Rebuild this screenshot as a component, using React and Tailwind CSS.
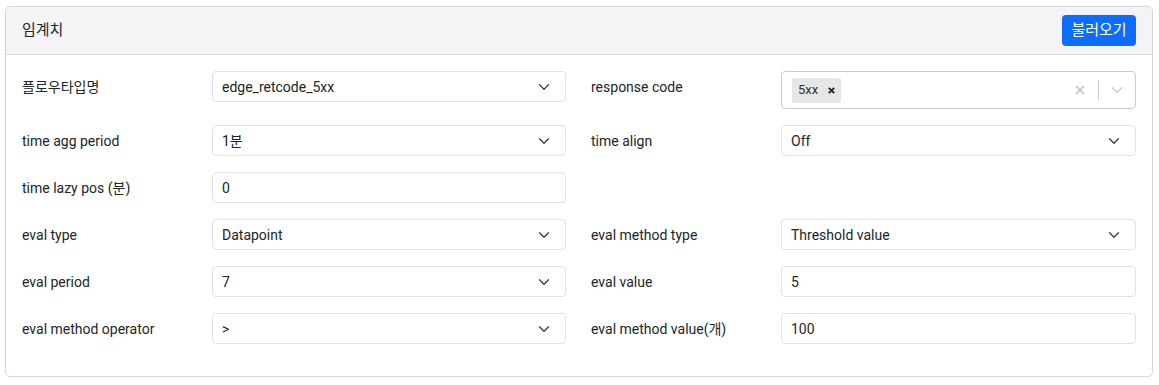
const font = { fontFamily: 'Roboto, "Noto Sans CJK KR", sans-serif' };

function Chevron({ className = 'text-[#343a40]' }) {
  return (
    <svg width="12" height="12" viewBox="0 0 16 16" className={className} fill="none">
      <path d="M2 5l6 6 6-6" stroke="currentColor" strokeWidth="1.6" strokeLinecap="round" strokeLinejoin="round" />
    </svg>
  );
}

function Select({ value }) {
  return (
    <div className="h-[31px] flex items-center justify-between pl-[9px] pr-[15px] border border-[#dee2e6] rounded-[4px] bg-white text-sm text-[#212529]">
      <span>{value}</span>
      <Chevron />
    </div>
  );
}

function Input({ value }) {
  return (
    <div className="h-[31px] flex items-center pl-[9px] border border-[#dee2e6] rounded-[4px] bg-white text-sm text-[#212529]">
      {value}
    </div>
  );
}

function MultiSelect() {
  return (
    <div className="h-[38px] flex items-center border border-[#cccccc] rounded-[4px] bg-white">
      <div className="flex-1 pl-[10px]">
        <span className="inline-flex items-center h-[25px] bg-[#e6e6e6] rounded-[2px] text-[13px] text-[#333]">
          <span className="pl-[6px] pr-[4px]">5xx</span>
          <span className="px-[5px] text-[#222]">
            <svg width="9" height="9" viewBox="0 0 10 10">
              <path d="M2 2l6 6M8 2l-6 6" stroke="currentColor" strokeWidth="2" />
            </svg>
          </span>
        </span>
      </div>
      <div className="flex items-center h-full">
        <span className="p-[8px] w-[36px] flex justify-center text-[#cccccc]">
          <svg width="12" height="12" viewBox="0 0 12 12">
            <path d="M2 2l8 8M10 2l-8 8" stroke="currentColor" strokeWidth="2" />
          </svg>
        </span>
        <span className="w-px h-[20px] bg-[#cccccc]" />
        <span className="p-[8px] w-[36px] flex justify-center">
          <Chevron className="text-[#cccccc]" />
        </span>
      </div>
    </div>
  );
}

function Field({ label, children }) {
  return (
    <div className="grid grid-cols-[190px_1fr] items-start">
      <label className="h-[31px] flex items-center text-sm text-[#212529]">{label}</label>
      <div>{children}</div>
    </div>
  );
}

export default function App() {
  return (
    <div className="bg-white w-[1159px] h-[385px] pt-[6px] pl-[5px] pr-[6px]" style={font}>
      <div className="border border-[#d6d6d9] rounded-[5px] overflow-hidden">
        <div className="h-[48px] flex items-center justify-between pl-[16px] pr-[16px] bg-[#f4f4f6] border-b border-[#d6d6d9]">
          <span className="text-[15px] text-[#212529]">임계치</span>
          <button className="h-[31px] w-[74px] rounded-[4px] bg-[#0d6efd] text-white text-[15px]">불러오기</button>
        </div>
        <div className="px-[16px] pt-[16px] pb-[32px] grid grid-cols-[544px_1fr] gap-x-[25px] gap-y-[16px]">
          <Field label="플로우타입명"><Select value="edge_retcode_5xx" /></Field>
          <Field label="response code"><MultiSelect /></Field>

          <Field label="time agg period"><Select value="1분" /></Field>
          <Field label="time align"><Select value="Off" /></Field>

          <Field label="time lazy pos (분)"><Input value="0" /></Field>
          <div />

          <Field label="eval type"><Select value="Datapoint" /></Field>
          <Field label="eval method type"><Select value="Threshold value" /></Field>

          <Field label="eval period"><Select value="7" /></Field>
          <Field label="eval value"><Input value="5" /></Field>

          <Field label="eval method operator"><Select value=">" /></Field>
          <Field label="eval method value(개)"><Input value="100" /></Field>
        </div>
      </div>
    </div>
  );
}
